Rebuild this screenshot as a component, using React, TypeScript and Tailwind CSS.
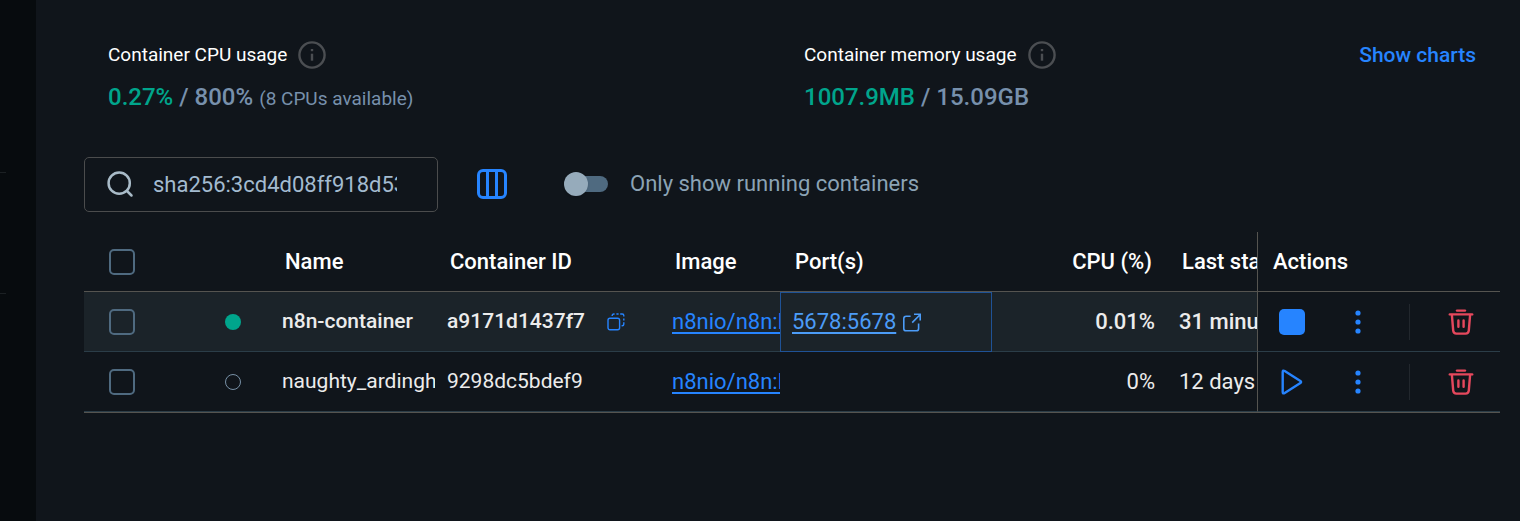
import React, { useState } from 'react';

type Container = {
  id: string;
  name: string;
  image: string;
  port?: string;
  cpu: string;
  lastStarted: string;
  running: boolean;
};

const containers: Container[] = [
  {
    id: 'a9171d1437f7',
    name: 'n8n-container',
    image: 'n8nio/n8n:latest',
    port: '5678:5678',
    cpu: '0.01%',
    lastStarted: '31 minutes ago',
    running: true,
  },
  {
    id: '9298dc5bdef9',
    name: 'naughty_ardinghelli',
    image: 'n8nio/n8n:latest',
    cpu: '0%',
    lastStarted: '12 days ago',
    running: false,
  },
];

const InfoIcon = () => (
  <svg width="28" height="28" viewBox="0 0 28 28" fill="none" stroke="#4b4e52" strokeWidth="2.4">
    <circle cx="14" cy="14" r="12.6" />
    <path d="M14 12.7v7" />
    <path d="M14 8v2.2" />
  </svg>
);

const SearchIcon = () => (
  <svg width="28" height="28" viewBox="0 0 28 28" fill="none" stroke="#a9bbc8" strokeWidth="2.5" strokeLinecap="round">
    <circle cx="12.2" cy="12.2" r="10.6" />
    <path d="M20 20l4.5 4.5" />
  </svg>
);

const ColumnsIcon = () => (
  <svg width="30" height="30" viewBox="0 0 30 30" fill="none" stroke="#2684ff" strokeWidth="3">
    <rect x="1.5" y="1.5" width="27" height="27" rx="4.5" />
    <path d="M10.5 2v26M19.5 2v26" />
  </svg>
);

const CopyIcon = () => (
  <svg width="18" height="18" viewBox="0 0 18 18" fill="none" stroke="#2684ff" strokeWidth="1.4">
    <rect x="1" y="5.2" width="11.6" height="11.6" rx="2" />
    <path d="M5.2 3V2.6Q5.2 1 6.8 1H7.6M9.4 1h2.2M13.2 1h2Q16.8 1 16.8 2.6V3.6M16.8 5.4v2.2M16.8 9.2v2Q16.8 12.7 15.2 12.7H14.6" />
  </svg>
);

const ExternalIcon = () => (
  <svg width="20" height="20" viewBox="0 0 20 20" fill="none" stroke="#4c9cf7" strokeWidth="1.6">
    <path d="M8.6 4.2H4.2Q1.8 4.2 1.8 6.6v9.8q0 2.4 2.4 2.4h10q2.4 0 2.4-2.4v-5" />
    <path d="M10.2 10.6L18 2.8M12 2.2h6.2v6.4" />
  </svg>
);

const StopIcon = () => (
  <svg width="26" height="26" viewBox="0 0 26 26" fill="#2684ff">
    <rect width="26" height="26" rx="5" />
  </svg>
);

const PlayIcon = () => (
  <svg width="26" height="26" viewBox="0 0 26 26" fill="none" stroke="#2684ff" strokeWidth="2.4" strokeLinejoin="round">
    <path d="M3.7 3.1Q3.7 .8 5.7 2L21.4 11.9Q22.8 13 21.4 14.1L5.7 24Q3.7 25.2 3.7 22.9Z" />
  </svg>
);

const MoreIcon = () => (
  <svg width="26" height="26" viewBox="0 0 26 26" fill="#2684ff">
    <circle cx="13" cy="4" r="2.6" />
    <circle cx="13" cy="13" r="2.6" />
    <circle cx="13" cy="22" r="2.6" />
  </svg>
);

const TrashIcon = () => (
  <svg width="26" height="26" viewBox="0 0 26 26" fill="none" stroke="#e5485d" strokeWidth="2.4" strokeLinecap="round">
    <path d="M9 1.6h8" />
    <path d="M1.8 5.4h22.4" />
    <path d="M3.9 6l1.3 15.6Q5.6 24.6 8.4 24.6h9.2Q20.4 24.6 20.8 21.6L22.1 6" />
    <path d="M10.4 11.4v6.4M15.6 11.4v6.4" />
  </svg>
);

const boxClass =
  'block size-[26px] appearance-none rounded-[5px] border-2 border-[#4f6a80] checked:bg-[#2684ff]';
const headClass =
  'h-[60px] overflow-hidden border-b border-[#555450] pl-[15px] text-left font-medium whitespace-nowrap text-white';
const cellClass = 'h-[60px] overflow-hidden border-b border-[#2b3d48] pl-3 whitespace-nowrap';

const ContainerRow: React.FC<{
  item: Container;
  checked: boolean;
  onCheck: () => void;
}> = ({ item, checked, onCheck }) => (
  <tr className={item.running ? 'bg-[#1b2329] font-medium' : ''}>
    <td className="h-[60px] border-b border-[#2b3d48] pl-[25px]">
      <input type="checkbox" aria-label={`Select ${item.name}`} checked={checked} onChange={onCheck} className={boxClass} />
    </td>
    <td className="h-[60px] border-b border-[#2b3d48] pl-[65px]">
      <span
        role="img"
        aria-label={item.running ? 'Running' : 'Exited'}
        className={`block size-4 rounded-full ${item.running ? 'bg-[#00a58c]' : 'border border-[#7790a6]'}`}
      />
    </td>
    <td className={`${cellClass} text-[21px]`}>{item.name}</td>
    <td className={`${cellClass} text-[21px]`}>
      <div className="flex items-center gap-[22px]">
        {item.id}
        {item.running && (
          <button aria-label="Copy container ID">
            <CopyIcon />
          </button>
        )}
      </div>
    </td>
    <td className={cellClass}>
      <a href="#image" className="font-normal text-[#2684ff] underline decoration-2 underline-offset-3">
        {item.image}
      </a>
    </td>
    <td className={`${cellClass} ${item.port ? 'outline outline-1 -outline-offset-1 outline-[#1f5296]' : ''}`}>
      {item.port && (
        <a href="#port" className="flex items-center gap-1.5 font-normal text-[#4c9cf7]">
          <span className="underline decoration-2 underline-offset-3">{item.port}</span>
          <ExternalIcon />
        </a>
      )}
    </td>
    <td className={`${cellClass} pr-3 text-right`}>{item.cpu}</td>
    <td className={cellClass}>{item.lastStarted}</td>
    <td className="h-[60px] border-b border-l border-b-[#2b3d48] border-l-[#555450] bg-[#10151b] pr-[26px] pl-[21px]">
      <div className="flex items-center">
        <button aria-label={item.running ? 'Stop' : 'Start'}>{item.running ? <StopIcon /> : <PlayIcon />}</button>
        <button aria-label="More actions" className="ml-10">
          <MoreIcon />
        </button>
        <span className="ml-auto h-9 border-l border-[#22272d]" />
        <button aria-label="Delete" className="ml-[38px]">
          <TrashIcon />
        </button>
      </div>
    </td>
  </tr>
);

const App: React.FC = () => {
  const [search, setSearch] = useState('sha256:3cd4d08ff918d53b7a2e');
  const [onlyRunning, setOnlyRunning] = useState(false);
  const [selected, setSelected] = useState<string[]>([]);

  const rows = containers.filter((c) => !onlyRunning || c.running);
  const allSelected = rows.every((c) => selected.includes(c.id));

  const toggle = (id: string) => {
    setSelected((prev) => (prev.includes(id) ? prev.filter((x) => x !== id) : [...prev, id]));
  };

  return (
    <div className="flex min-h-screen bg-[#10151b] font-['Roboto',sans-serif] text-[22px] text-[#ececec]">
      <aside className="w-9 shrink-0 bg-[#070b0e] pt-[172px]">
        <hr className="w-1.5 border-[#1b2023]" />
        <hr className="mt-[120px] w-1.5 border-[#1b2023]" />
      </aside>

      <main className="min-w-0 flex-1 pt-10 pr-5 pl-12">
        <section className="grid grid-cols-2 gap-6 px-6">
          <div>
            <div className="flex h-[30px] items-center gap-[11px] text-[19px] text-white">
              Container CPU usage
              <InfoIcon />
            </div>
            <p className="mt-[11px] text-2xl font-medium text-[#7790ac]">
              <span className="text-[#00a58c]">0.27%</span> / 800%{' '}
              <span className="text-[19px] font-normal">(8 CPUs available)</span>
            </p>
          </div>
          <div className="flex items-start justify-between">
            <div>
              <div className="flex h-[30px] items-center gap-[11px] text-[19px] text-white">
                Container memory usage
                <InfoIcon />
              </div>
              <p className="mt-[11px] text-2xl font-medium text-[#7790ac]">
                <span className="text-[#00a58c]">1007.9MB</span> / 15.09GB
              </p>
            </div>
            <button className="h-[30px] text-[21px] font-medium text-[#2684ff]">Show charts</button>
          </div>
        </section>

        <section className="mt-11 flex items-center">
          <label className="flex h-[55px] w-[354px] items-center gap-[18px] rounded-[5px] border border-[#4b4c4d] pr-10 pl-[22px]">
            <SearchIcon />
            <input
              type="text"
              aria-label="Search"
              value={search}
              onChange={(e) => setSearch(e.target.value)}
              className="min-w-0 flex-1 bg-transparent text-[#a3bbd0] outline-none"
            />
          </label>
          <button aria-label="Choose columns" className="ml-[39px] pb-0.5">
            <ColumnsIcon />
          </button>
          <label className="ml-[61px] flex items-center gap-[22px] pb-0.5 text-[#8ba3b5]">
            <input
              type="checkbox"
              role="switch"
              checked={onlyRunning}
              onChange={() => setOnlyRunning(!onlyRunning)}
              className="flex h-4 w-10 appearance-none items-center rounded-full bg-[#4f6a80] before:-ml-1 before:size-6 before:shrink-0 before:rounded-full before:bg-[#96abbb] before:shadow checked:before:ml-5"
            />
            Only show running containers
          </label>
        </section>

        <div className="mt-5 border-b border-[#555450]">
          <table className="w-full table-fixed border-separate border-spacing-0">
            <colgroup>
              <col className="w-[76px]" />
              <col className="w-[110px]" />
              <col className="w-[165px]" />
              <col className="w-[225px]" />
              <col className="w-[120px]" />
              <col />
              <col className="w-[175px]" />
              <col className="w-[90px]" />
              <col className="w-[243px]" />
            </colgroup>
            <thead>
              <tr>
                <th className="h-[60px] border-b border-[#555450] pl-[25px]">
                  <input
                    type="checkbox"
                    aria-label="Select all"
                    checked={allSelected}
                    onChange={() => setSelected(allSelected ? [] : rows.map((c) => c.id))}
                    className={boxClass}
                  />
                </th>
                <th className={headClass} />
                <th className={headClass}>Name</th>
                <th className={headClass}>Container ID</th>
                <th className={headClass}>Image</th>
                <th className={headClass}>Port(s)</th>
                <th className="h-[60px] border-b border-[#555450] pr-[15px] text-right font-medium text-white">CPU (%)</th>
                <th className={headClass}>Last started</th>
                <th className={`${headClass} border-l`}>Actions</th>
              </tr>
            </thead>
            <tbody>
              {rows.map((item) => (
                <ContainerRow
                  key={item.id}
                  item={item}
                  checked={selected.includes(item.id)}
                  onCheck={() => toggle(item.id)}
                />
              ))}
            </tbody>
          </table>
        </div>
      </main>
    </div>
  );
};

export default App;
